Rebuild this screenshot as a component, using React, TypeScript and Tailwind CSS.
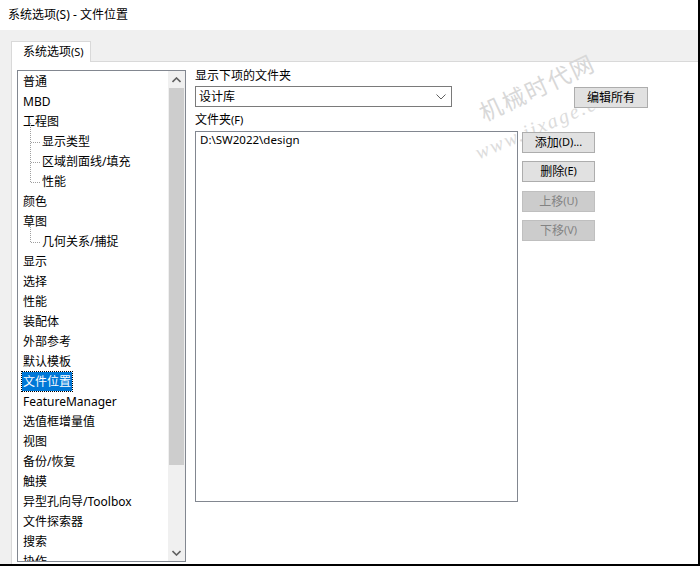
import React from 'react';

interface Item {
  label: string;
  child?: boolean;
  last?: boolean;
  first?: boolean;
  selected?: boolean;
}

const items: Item[] = [
  { label: '普通' },
  { label: 'MBD' },
  { label: '工程图' },
  { label: '显示类型', child: true, first: true },
  { label: '区域剖面线/填充', child: true },
  { label: '性能', child: true, last: true },
  { label: '颜色' },
  { label: '草图' },
  { label: '几何关系/捕捉', child: true, first: true, last: true },
  { label: '显示' },
  { label: '选择' },
  { label: '性能' },
  { label: '装配体' },
  { label: '外部参考' },
  { label: '默认模板' },
  { label: '文件位置', selected: true },
  { label: 'FeatureManager' },
  { label: '选值框增量值' },
  { label: '视图' },
  { label: '备份/恢复' },
  { label: '触摸' },
  { label: '异型孔向导/Toolbox' },
  { label: '文件探索器' },
  { label: '搜索' },
  { label: '协作' },
];

const font = { fontFamily: '"Noto Sans", "Noto Sans CJK SC", sans-serif' };

function TreeLine({ first, last }: { first?: boolean; last?: boolean }) {
  return (
    <svg width="19" height="20" className="shrink-0 overflow-visible">
      <line
        x1="8.5"
        y1={first ? -8 : 0}
        x2="8.5"
        y2={last ? 11 : 20}
        stroke="#a0a0a0"
        strokeDasharray="1 1"
      />
      <line x1="9" y1="11.5" x2="18" y2="11.5" stroke="#a0a0a0" strokeDasharray="1 1" />
    </svg>
  );
}

function Btn({ children, disabled }: { children: React.ReactNode; disabled?: boolean }) {
  return (
    <div
      className={
        'relative z-10 w-[73px] h-[21px] flex items-center justify-center text-[12px] border ' +
        (disabled ? 'bg-[#cccccc] border-[#bfbfbf] text-[#838383]' : 'bg-[#e1e1e1] border-[#adadad] text-black')
      }
    >
      {children}
    </div>
  );
}

export default function App() {
  return (
    <div
      className="relative w-[700px] h-[566px] overflow-hidden bg-white border-r-2 border-b-2 border-black flex flex-col text-black"
      style={font}
    >
      <div className="h-[30px] shrink-0 flex items-center pl-2 text-[12px]">系统选项(S) - 文件位置</div>

      <div className="flex-1 flex flex-col bg-[#f0f0f0] pl-[11px] pt-[11px]">
        <div className="w-[80px] h-[21px] -mb-px relative bg-white border border-b-0 border-[#d9d9d9] flex items-center pl-[11px] text-[12px]">
          系统选项<span className="text-[11px]">(S)</span>
        </div>

        <div className="flex-1 flex bg-white border-t border-l border-[#d9d9d9] pl-[5px] pt-[8px]">
          {/* left tree list */}
          <div className="w-[169px] h-[492px] border border-[#828790] flex">
            <div className="flex-1 overflow-hidden pl-[4px] text-[12px]">
              {items.map((it, i) => (
                <div key={i} className="h-[20px] flex items-center">
                  {it.child && <TreeLine first={it.first} last={it.last} />}
                  <span
                    className={
                      'px-px h-[19px] leading-[19px] whitespace-nowrap ' +
                      (it.selected ? 'bg-[#0078d7] text-white outline-1 outline-dotted outline-black' : '')
                    }
                  >
                    {it.label}
                  </span>
                </div>
              ))}
            </div>
            <div className="w-[17px] flex flex-col bg-[#f0f0f0]">
              <div className="h-[17px] flex items-center justify-center">
                <svg width="9" height="6" viewBox="0 0 9 6">
                  <polyline points="0.5,5 4.5,1 8.5,5" fill="none" stroke="#606060" strokeWidth="1.6" />
                </svg>
              </div>
              <div className="flex-1">
                <div className="h-[377px] mx-px bg-[#cdcdcd]" />
              </div>
              <div className="h-[17px] flex items-center justify-center">
                <svg width="9" height="6" viewBox="0 0 9 6">
                  <polyline points="0.5,1 4.5,5 8.5,1" fill="none" stroke="#606060" strokeWidth="1.6" />
                </svg>
              </div>
            </div>
          </div>

          {/* right side */}
          <div className="ml-[9px] flex flex-col -mt-[2px] text-[12px]">
            <div className="h-[16px] leading-[16px]">显示下项的文件夹</div>
            <div className="mt-[2px] flex items-start">
              <div className="w-[257px] h-[21px] border border-[#7a7a7a] bg-white flex items-center justify-between pl-[3px] pr-[5px]">
                <span>设计库</span>
                <svg width="10" height="6" viewBox="0 0 10 6">
                  <polyline points="0.5,0.5 5,5 9.5,0.5" fill="none" stroke="#606060" strokeWidth="1" />
                </svg>
              </div>
              <div className="ml-[122px] mt-px">
                <div className="relative z-10 w-[74px] h-[21px] flex items-center justify-center text-[12px] border bg-[#e1e1e1] border-[#adadad]">
                  编辑所有
                </div>
              </div>
            </div>
            <div className="mt-[4px] h-[16px] leading-[16px]">
              文件夹<span className="text-[11px]">(F)</span>
            </div>
            <div className="mt-[3px] flex items-start">
              <div className="w-[323px] h-[371px] border border-[#828790] pl-[4px]">
                <div className="h-[16px] leading-[16px] text-[11.5px]">D:\SW2022\design</div>
              </div>
              <div className="ml-[4px] mt-px flex flex-col">
                <Btn>
                  添加<span className="text-[11px]">(D)...</span>
                </Btn>
                <div className="mt-[8px]">
                  <Btn>
                    删除<span className="text-[11px]">(E)</span>
                  </Btn>
                </div>
                <div className="mt-[9px]">
                  <Btn disabled>
                    上移<span className="text-[11px]">(U)</span>
                  </Btn>
                </div>
                <div className="mt-[8px]">
                  <Btn disabled>
                    下移<span className="text-[11px]">(V)</span>
                  </Btn>
                </div>
              </div>
            </div>
          </div>
        </div>
      </div>

      {/* watermark */}
      <div
        className="absolute z-[5] left-[480px] top-[98px] h-[30px] leading-[30px] -rotate-[25deg] origin-left text-[23px] tracking-[2px] text-[#d8d8d8] pointer-events-none whitespace-nowrap"
        style={{ fontFamily: '"Noto Sans CJK SC", sans-serif' }}
      >
        机械时代网
      </div>
      <div
        className="absolute z-[5] left-[476px] top-[141px] h-[24px] leading-[24px] -rotate-[23deg] origin-left text-[20px] tracking-[2px] italic text-[#dcdcdc] pointer-events-none whitespace-nowrap"
        style={{ fontFamily: '"Liberation Serif", serif' }}
      >
        www.jixage.com
      </div>
    </div>
  );
}
